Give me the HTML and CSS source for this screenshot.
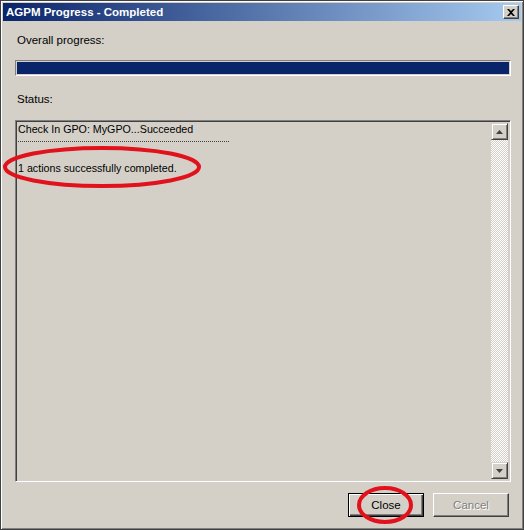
FILE: index.html
```html
<!DOCTYPE html>
<html>
<head>
<meta charset="utf-8">
<link rel="stylesheet" href="styles.css">
</head>
<body>
<div class="window">
  <div class="titlebar">
    <span class="title">AGPM Progress - Completed</span>
    <span class="close-btn">
      <svg width="8" height="7" viewBox="0 0 8 7"><path d="M0 0h2l2 2 2-2h2L5 3.5 8 7H6L4 5 2 7H0l3-3.5z" fill="#000"/></svg>
    </span>
  </div>
  <div class="content">
    <div class="label">Overall progress:</div>
    <div class="progress"><div class="fill"></div></div>
    <div class="label status">Status:</div>
    <div class="textbox">
      <div class="text">
        <div class="line">Check In GPO: MyGPO...Succeeded</div>
        <div class="dash"></div>
        <div class="line done">1 actions successfully completed.</div>
      </div>
      <div class="scrollbar">
        <div class="arrow"><svg width="7" height="4" viewBox="0 0 7 4"><path d="M3.5 0L7 4H0z" fill="#404040"/></svg></div>
        <div class="track"></div>
        <div class="arrow"><svg width="7" height="4" viewBox="0 0 7 4"><path d="M0 0h7L3.5 4z" fill="#404040"/></svg></div>
      </div>
    </div>
    <div class="buttons">
      <div class="btn default"><span>Close</span></div>
      <div class="btn disabled"><span>Cancel</span></div>
    </div>
  </div>
  <svg class="marks" width="524" height="530" viewBox="0 0 524 530">
    <ellipse cx="102" cy="167" rx="97" ry="19" fill="none" stroke="#e2121c" stroke-width="4"/>
    <ellipse cx="385" cy="505" rx="26" ry="17" fill="none" stroke="#e2121c" stroke-width="4"/>
  </svg>
</div>
</body>
</html>
```
FILE: styles.css
```css
html, body {
  margin: 0;
  padding: 0;
  background: #d4d0c8;
}
.window {
  position: relative;
  width: 524px;
  height: 530px;
  box-sizing: border-box;
  border: 1px solid #404040;
  padding: 2px;
  background: #d4d0c8;
  box-shadow: inset 1px 1px 0 #ffffff, inset -1px -1px 0 #808080;
  display: flex;
  flex-direction: column;
  font-family: "Liberation Sans", Arial, sans-serif;
  font-size: 10.7px;
  color: #000;
}
.titlebar {
  height: 18px;
  background: linear-gradient(to right, #0a246a, #a6caf0);
  display: flex;
  align-items: center;
  justify-content: space-between;
  padding: 0 2px 0 3px;
}
.title {
  color: #fff;
  font-weight: bold;
  font-size: 11.5px;
  font-family: "Liberation Sans", Arial, sans-serif;
}
.close-btn {
  width: 16px;
  height: 14px;
  box-sizing: border-box;
  background: #d4d0c8;
  border: 1px solid;
  border-color: #fff #404040 #404040 #fff;
  box-shadow: inset -1px -1px 0 #808080;
  display: flex;
  align-items: center;
  justify-content: center;
}
.content {
  flex: 1;
  display: flex;
  flex-direction: column;
  padding: 12px 10px 0 12px;
}
.label {
  padding-left: 2px;
  line-height: 14px;
  font-size: 11.5px;
  color: #000;
}
.progress {
  margin-top: 13px;
  height: 16px;
  box-sizing: border-box;
  border: 1px solid;
  border-color: #808080 #fff #fff #808080;
  padding: 1px;
}
.fill {
  height: 100%;
  background: #0a246a;
}
.status {
  margin-top: 16px;
}
.textbox {
  margin-top: 14px;
  height: 362px;
  box-sizing: border-box;
  border: 1px solid;
  border-color: #808080 #fff #fff #808080;
  box-shadow: inset 1px 1px 0 #404040, inset -1px -1px 0 #d4d0c8;
  padding: 2px;
  display: flex;
}
.text {
  flex: 1;
  padding: 0;
}
.line {
  line-height: 13px;
}
.dash {
  width: 211px;
  height: 1px;
  margin-top: 5px;
  background: repeating-linear-gradient(to right, #404040 0 1px, transparent 1px 2px);
}
.done {
  margin-top: 20px;
}
.scrollbar {
  width: 17px;
  display: flex;
  flex-direction: column;
}
.arrow {
  width: 17px;
  height: 17px;
  box-sizing: border-box;
  background: #d4d0c8;
  border: 1px solid;
  border-color: #d4d0c8 #404040 #404040 #d4d0c8;
  box-shadow: inset 1px 1px 0 #fff, inset -1px -1px 0 #808080;
  display: flex;
  align-items: center;
  justify-content: center;
}
.track {
  flex: 1;
  background: repeating-conic-gradient(#ffffff 0 25%, #d4d0c8 0 50%) 0 0 / 2px 2px;
}
.buttons {
  display: flex;
  justify-content: flex-end;
  gap: 9px;
  margin-top: 11px;
  padding-right: 2px;
  font-size: 11.5px;
}
.btn {
  width: 76px;
  height: 24px;
  box-sizing: border-box;
  border: 1px solid;
  border-color: #fff #404040 #404040 #fff;
  box-shadow: inset -1px -1px 0 #808080;
  display: flex;
  align-items: center;
  justify-content: center;
}
.btn.default {
  border: 1px solid #000;
  box-shadow: inset 1px 1px 0 #fff, inset -1px -1px 0 #404040, inset -2px -2px 0 #808080;
}
.btn.disabled span {
  color: #808080;
  text-shadow: 1px 1px 0 #fff;
}
.marks {
  position: absolute;
  left: -1px;
  top: -1px;
  pointer-events: none;
}
```
